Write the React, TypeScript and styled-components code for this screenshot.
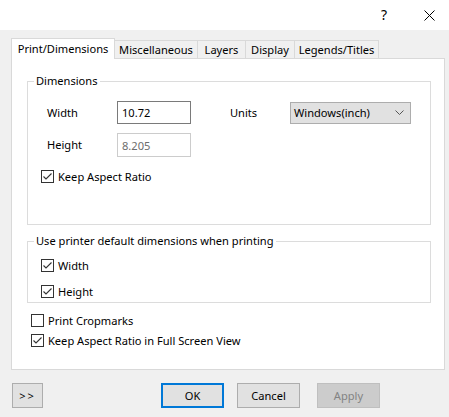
import styled, { createGlobalStyle } from 'styled-components';

const GlobalStyle = createGlobalStyle`
  html, body {
    margin: 0;
    padding: 0;
    background: #f0f0f0;
  }
  body {
    font-family: "Noto Sans", "Open Sans", sans-serif;
    font-size: 11.1px;
    color: #000;
  }
`;

const tabs = [
  { label: 'Print/Dimensions', width: 104, active: true },
  { label: 'Miscellaneous', width: 84 },
  { label: 'Layers', width: 49 },
  { label: 'Display', width: 50 },
  { label: 'Legends/Titles', width: 85 },
];

const Check: React.FC<{ checked?: boolean; label: string }> = ({ checked, label }) => (
  <CheckRow>
    <Box>
      {checked && (
        <svg width="11" height="11" viewBox="0 0 11 11">
          <polyline points="1.5,5.5 4,8 9.5,2.5" fill="none" stroke="#333" strokeWidth="1.1" />
        </svg>
      )}
    </Box>
    <span>{label}</span>
  </CheckRow>
);

const App: React.FC = () => {
  return (
    <Window>
      <GlobalStyle />
      <TitleBar>
        <Help>?</Help>
        <Close>
          <svg width="11" height="11" viewBox="0 0 11 11">
            <path d="M0.5 0.5 L10.5 10.5 M10.5 0.5 L0.5 10.5" stroke="#000" strokeWidth="1" />
          </svg>
        </Close>
      </TitleBar>

      <Body>
        <TabStrip>
          {tabs.map((t) => (
            <Tab key={t.label} $active={t.active} $width={t.width}>
              {t.label}
            </Tab>
          ))}
        </TabStrip>

        <Panel>
          <Group>
            <Legend>Dimensions</Legend>
            <FieldGrid>
              <Label>Width</Label>
              <Input defaultValue="10.72" />
              <span />
              <Label>Units</Label>
              <Select>
                <span>Windows(inch)</span>
                <svg width="9" height="6" viewBox="0 0 9 6">
                  <polyline points="0.5,0.5 4.5,4.5 8.5,0.5" fill="none" stroke="#555" strokeWidth="1" />
                </svg>
              </Select>
              <Label>Height</Label>
              <Input defaultValue="8.205" disabled $tall />
            </FieldGrid>
            <CheckGroup $top={13}>
              <Check checked label="Keep Aspect Ratio" />
            </CheckGroup>
          </Group>

          <Group $second>
            <Legend>Use printer default dimensions when printing</Legend>
            <CheckGroup $top={0}>
              <Check checked label="Width" />
              <Check checked label="Height" />
            </CheckGroup>
          </Group>

          <LooseChecks>
            <Check label="Print Cropmarks" />
            <Check checked label="Keep Aspect Ratio in Full Screen View" />
          </LooseChecks>
        </Panel>

        <Footer>
          <Button $width={31}>&gt;&gt;</Button>
          <Button $primary $gap={118}>OK</Button>
          <Button $gap={13}>Cancel</Button>
          <Button $disabled $gap={17}>Apply</Button>
        </Footer>
      </Body>
    </Window>
  );
};

const Window = styled.div`
  width: 449px;
  height: 417px;
  background: #f0f0f0;
  overflow: hidden;
`;

const TitleBar = styled.div`
  height: 30px;
  background: #fff;
  display: flex;
  align-items: center;
  justify-content: flex-end;
  padding-right: 14px;
  box-sizing: border-box;
`;

const Help = styled.span`
  font-size: 14px;
  margin-right: 37px;
  margin-top: -2px;
`;

const Close = styled.span`
  display: flex;
  margin-top: 1px;
`;

const Body = styled.div`
  padding-top: 8px;
`;

const TabStrip = styled.div`
  display: flex;
  align-items: flex-end;
  height: 21px;
  margin-left: 11px;
  margin-bottom: -1px;
  position: relative;
  z-index: 1;
`;

const Tab = styled.div<{ $active?: boolean; $width: number }>`
  box-sizing: border-box;
  width: ${({ $width }) => $width}px;
  height: ${({ $active }) => ($active ? 21 : 18)}px;
  margin-bottom: ${({ $active }) => ($active ? 0 : 1)}px;
  margin-left: ${({ $active }) => ($active ? 0 : -1)}px;
  background: ${({ $active }) => ($active ? '#fff' : '#f0f0f0')};
  border: 1px solid #d9d9d9;
  border-bottom: none;
  display: flex;
  align-items: center;
  justify-content: center;
  padding-bottom: ${({ $active }) => ($active ? 2 : 0)}px;
  white-space: nowrap;
  position: relative;
  z-index: ${({ $active }) => ($active ? 2 : 1)};
`;

const Panel = styled.div`
  box-sizing: border-box;
  width: 434px;
  height: 312px;
  margin-left: 11px;
  background: #fff;
  border: 1px solid #d9d9d9;
  padding: 14px 13px 0 15px;
`;

const Group = styled.fieldset<{ $second?: boolean }>`
  margin: ${({ $second }) => ($second ? '8px 0 0' : '0')};
  border: 1px solid #dcdcdc;
  padding: ${({ $second }) => ($second ? '10px 0 4px 13px' : '12px 0 41px 13px')};
  min-width: 0;
`;

const Legend = styled.legend`
  margin-left: -7px;
  padding: 0 2px;
  line-height: 16px;
`;

const FieldGrid = styled.div`
  display: grid;
  grid-template-columns: 70px 74px 39px 60px 121px;
  align-items: center;
  row-gap: 9px;
  padding-left: 6px;
`;

const Label = styled.span`
  line-height: 16px;
`;

const Input = styled.input<{ $tall?: boolean }>`
  box-sizing: border-box;
  width: 74px;
  height: ${({ $tall }) => ($tall ? 24 : 23)}px;
  border: 1px solid ${({ disabled }) => (disabled ? '#cccccc' : '#7a7a7a')};
  background: #fff;
  font: inherit;
  color: ${({ disabled }) => (disabled ? '#6d6d6d' : '#000')};
  padding: 0 4px;
  outline: none;
`;

const Select = styled.div`
  box-sizing: border-box;
  height: 22px;
  border: 1px solid #adadad;
  background: #e1e1e1;
  display: flex;
  align-items: center;
  justify-content: space-between;
  padding: 0 6px 0 3px;
`;

const CheckGroup = styled.div<{ $top: number }>`
  display: flex;
  flex-direction: column;
  gap: 13px;
  margin-top: ${({ $top }) => $top}px;
`;

const LooseChecks = styled.div`
  display: flex;
  flex-direction: column;
  gap: 7px;
  margin: 11px 0 0 4px;
`;

const CheckRow = styled.label`
  display: flex;
  align-items: center;
  gap: 4px;
  height: 13px;
  line-height: 16px;
  white-space: nowrap;
`;

const Box = styled.span`
  box-sizing: border-box;
  width: 13px;
  height: 13px;
  border: 1px solid #333;
  background: #fff;
  display: flex;
  align-items: center;
  justify-content: center;
  flex: none;
`;

const Footer = styled.div`
  display: flex;
  padding: 13px 0 0 12px;
`;

const Button = styled.div<{ $primary?: boolean; $disabled?: boolean; $width?: number; $gap?: number }>`
  box-sizing: border-box;
  width: ${({ $width }) => $width ?? 63}px;
  height: 25px;
  margin-left: ${({ $gap }) => $gap ?? 0}px;
  display: flex;
  align-items: center;
  justify-content: center;
  background: ${({ $disabled }) => ($disabled ? '#cccccc' : '#e1e1e1')};
  border: ${({ $primary, $disabled }) =>
    $primary ? '2px solid #0078d7' : `1px solid ${$disabled ? '#bfbfbf' : '#adadad'}`};
  color: ${({ $disabled }) => ($disabled ? '#838383' : '#000')};
  letter-spacing: ${({ $width }) => ($width ? '2px' : '0')};
`;

export default App;
